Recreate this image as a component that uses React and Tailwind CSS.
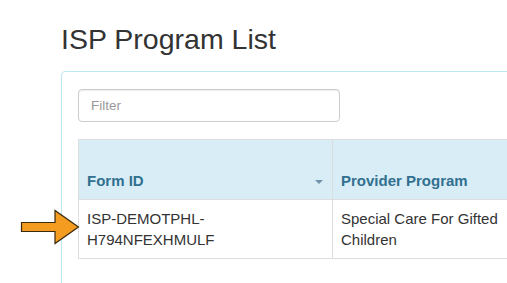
import React from 'react'

const rows = [
  { id: ['ISP-DEMOTPHL-', 'H794NFEXHMULF'], program: ['Special Care For Gifted', 'Children'] },
]

export default function App() {
  return (
    <div className="relative w-[507px] h-[283px] overflow-hidden bg-white text-[15px] text-[#333] font-['Liberation_Sans',Arial,sans-serif]">
      <div className="pl-[61px] pt-[23px]">
        <h1 className="text-[28.5px] leading-[32px] text-[#333] font-normal">ISP Program List</h1>

        <div className="mt-4 w-[700px] h-[260px] border border-[#bce8f1] rounded-tl-[4px] pl-4 pt-[17px]">
          <input
            placeholder="Filter"
            className="block w-[262px] h-[33px] border border-[#ccc] rounded-[4px] px-3 text-[13.5px] placeholder:text-[#999] outline-none shadow-[inset_0_1px_1px_rgba(0,0,0,0.075)]"
          />

          <table className="mt-[17px] border-collapse w-[640px] table-fixed">
            <thead>
              <tr className="bg-[#d9edf7] h-[60px]">
                <th className="w-[254px] border border-[#ddd] px-2 pb-2 align-bottom text-left text-[#31708f] font-bold leading-[21px]">
                  <div className="flex items-center justify-between">
                    <span>Form ID</span>
                    <span className="mr-[1px] mt-[3px] w-0 h-0 border-l-4 border-r-4 border-t-4 border-l-transparent border-r-transparent border-t-[#6f93ad]" />
                  </div>
                </th>
                <th className="border border-[#ddd] px-2 pb-2 align-bottom text-left text-[#31708f] font-bold leading-[21px]">
                  Provider Program
                </th>
              </tr>
            </thead>
            <tbody>
              {rows.map((r) => (
                <tr key={r.id.join('')}>
                  <td className="border border-[#ddd] px-2 py-2 leading-[21px] align-top">
                    {r.id[0]}<br />{r.id[1]}
                  </td>
                  <td className="border border-[#ddd] px-2 py-2 leading-[21px] align-top">
                    {r.program[0]}<br />{r.program[1]}
                  </td>
                </tr>
              ))}
            </tbody>
          </table>
        </div>
      </div>

      <svg className="absolute left-[20px] top-[209px]" width="62" height="36" viewBox="0 0 62 36">
        <path
          d="M1.5 13.5 H35 V1.5 L58.5 18 L35 34.5 V22.5 H1.5 Z"
          fill="#f39c1f"
          stroke="#3a2a10"
          strokeWidth="1.2"
          strokeLinejoin="miter"
        />
      </svg>
    </div>
  )
}
